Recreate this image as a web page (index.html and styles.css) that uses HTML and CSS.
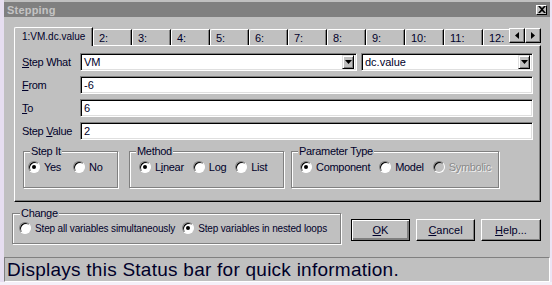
FILE: index.html
```html
<!DOCTYPE html>
<html>
<head>
    <title>Stepping</title>
    <meta charset="UTF-8">
    <link rel="stylesheet" href="styles.css">
</head>
<body>
    <div class="window">
        <div class="titlebar">
            <span class="title">Stepping</span>
            <span class="close">
                <svg width="8" height="7" viewBox="0 0 8 7"><path d="M0 0h2l2 2 2-2h2L5 3.5 8 7H6L4 5 2 7H0l3-3.5z" fill="#000"/></svg>
            </span>
        </div>

        <div class="tabstrip">
            <div class="tablist">
                <div class="tab active">1:VM.dc.value</div>
                <div class="tab">2:</div>
                <div class="tab">3:</div>
                <div class="tab">4:</div>
                <div class="tab">5:</div>
                <div class="tab">6:</div>
                <div class="tab">7:</div>
                <div class="tab">8:</div>
                <div class="tab">9:</div>
                <div class="tab">10:</div>
                <div class="tab">11:</div>
                <div class="tab">12:</div>
            </div>
            <div class="scroller">
                <span class="btn-small"><svg width="4" height="7" viewBox="0 0 4 7"><path d="M4 0v7L0 3.5z" fill="#000"/></svg></span>
                <span class="btn-small"><svg width="4" height="7" viewBox="0 0 4 7"><path d="M0 0v7l4-3.5z" fill="#000"/></svg></span>
            </div>
        </div>

        <div class="panel">
            <div class="row">
                <label class="label"><u>S</u>tep What</label>
                <div class="field combo wide">VM<span class="drop"><svg width="7" height="4" viewBox="0 0 7 4"><path d="M0 0h7L3.5 4z" fill="#000"/></svg></span></div>
                <div class="field combo narrow">dc.value<span class="drop"><svg width="7" height="4" viewBox="0 0 7 4"><path d="M0 0h7L3.5 4z" fill="#000"/></svg></span></div>
            </div>
            <div class="row">
                <label class="label"><u>F</u>rom</label>
                <div class="field">-6</div>
            </div>
            <div class="row">
                <label class="label"><u>T</u>o</label>
                <div class="field">6</div>
            </div>
            <div class="row">
                <label class="label">Step <u>V</u>alue</label>
                <div class="field">2</div>
            </div>

            <div class="groups">
                <div class="group step-it">
                    <span class="legend">Step It</span>
                    <div class="options">
                        <span class="opt"><span class="radio on"></span><span>Yes</span></span>
                        <span class="opt"><span class="radio"></span><span>No</span></span>
                    </div>
                </div>
                <div class="group method">
                    <span class="legend">Method</span>
                    <div class="options">
                        <span class="opt"><span class="radio on"></span><span>L<u>i</u>near</span></span>
                        <span class="opt"><span class="radio"></span><span>Log</span></span>
                        <span class="opt"><span class="radio"></span><span>List</span></span>
                    </div>
                </div>
                <div class="group param">
                    <span class="legend">Parameter Type</span>
                    <div class="options">
                        <span class="opt"><span class="radio on"></span><span>Component</span></span>
                        <span class="opt"><span class="radio"></span><span>Model</span></span>
                        <span class="opt disabled"><span class="radio"></span><span>Symbolic</span></span>
                    </div>
                </div>
            </div>
        </div>

        <div class="bottom">
            <div class="group change">
                <span class="legend">Change</span>
                <div class="options">
                    <span class="opt"><span class="radio"></span><span>Step all variables simultaneously</span></span>
                    <span class="opt"><span class="radio on"></span><span>Step variables in nested loops</span></span>
                </div>
            </div>
            <div class="buttons">
                <button class="button ok"><u>O</u>K</button>
                <button class="button"><u>C</u>ancel</button>
                <button class="button help"><u>H</u>elp...</button>
            </div>
        </div>

        <div class="statusbar">Displays this Status bar for quick information.</div>
    </div>
</body>
</html>
```

FILE: styles.css
```css
* {
    box-sizing: border-box;
}
body {
    margin: 0;
    background-color: #f4f0f8;
    font-family: "Liberation Sans", Arial, sans-serif;
    font-size: 10px;
    color: #00002a;
}
u {
    text-decoration: underline;
    text-underline-offset: 1px;
}
.window {
    width: 552px;
    height: 282px;
    overflow: hidden;
    background-color: #c0c0c0;
    border-left: 4px solid #e6def0;
    border-right: 2px solid #ece4f4;
    display: flex;
    flex-direction: column;
}

/* title bar */
.titlebar {
    margin-top: 2px;
    height: 15px;
    background-color: #808080;
    display: flex;
    align-items: center;
    justify-content: space-between;
    padding: 0 3px 0 3px;
}
.title {
    font-weight: bold;
    font-size: 11px;
    letter-spacing: 0.2px;
    color: #c4c4c4;
}
.close {
    width: 11px;
    height: 10px;
    background-color: #c0c0c0;
    border-top: 1px solid #fff;
    border-left: 1px solid #fff;
    border-right: 1px solid #000;
    border-bottom: 1px solid #000;
    display: flex;
    align-items: center;
    justify-content: center;
}

/* tabs */
.tabstrip {
    margin: 10px 0 -1px 10px;
    height: 19px;
    display: flex;
    position: relative;
    z-index: 1;
}
.tablist {
    width: 495px;
    overflow: hidden;
    display: flex;
    align-items: flex-end;
}
.tab {
    flex: none;
    width: 39px;
    height: 16px;
    margin-bottom: 1px;
    padding: 2px 0 0 5px;
    font-size: 11px;
    border-top: 1px solid #fff;
    border-left: 1px solid #fff;
    border-right: 1px solid #000;
    border-top-left-radius: 2px;
    box-shadow: inset -1px 0 #808080;
    white-space: nowrap;
}
.tab.active {
    width: 79px;
    height: 19px;
    margin-bottom: 0;
    padding: 3px 0 0 7px;
    font-size: 10px;
    background-color: #c0c0c0;
}
.scroller {
    display: flex;
    margin-top: 1px;
    height: 15px;
}
.btn-small {
    width: 16px;
    height: 15px;
    border-top: 1px solid #fff;
    border-left: 1px solid #fff;
    border-right: 1px solid #000;
    border-bottom: 1px solid #000;
    box-shadow: inset -1px -1px #808080;
    display: flex;
    align-items: center;
    justify-content: center;
}

/* panel */
.panel {
    margin-left: 10px;
    width: 527px;
    height: 157px;
    padding: 7px 0 0 7px;
    border-top: 1px solid #fff;
    border-left: 1px solid #fff;
    border-right: 1px solid #000;
    border-bottom: 1px solid #000;
    box-shadow: inset -1px -1px #808080;
}
.row {
    display: flex;
    align-items: center;
    height: 18px;
    margin-bottom: 5px;
}
.label {
    width: 58px;
    flex: none;
    font-size: 11px;
    letter-spacing: -0.3px;
}
.field {
    width: 453px;
    height: 18px;
    background-color: #fff;
    padding: 2px 0 0 3px;
    font-size: 11px;
    border-top: 1px solid #808080;
    border-left: 1px solid #808080;
    border-right: 1px solid #fff;
    border-bottom: 1px solid #fff;
    box-shadow: inset 1px 1px #000, inset -1px -1px #dfdfdf;
}
.combo {
    display: flex;
    justify-content: space-between;
    padding: 2px 2px 0 3px;
}
.combo.wide {
    width: 277px;
    margin-right: 4px;
}
.combo.narrow {
    width: 172px;
}
.drop {
    width: 12px;
    height: 14px;
    margin-top: -1px;
    background-color: #c0c0c0;
    border-top: 1px solid #dfdfdf;
    border-left: 1px solid #dfdfdf;
    border-right: 1px solid #000;
    border-bottom: 1px solid #000;
    box-shadow: inset 1px 1px #fff, inset -1px -1px #808080;
    display: flex;
    align-items: center;
    justify-content: center;
}

/* group boxes */
.groups {
    display: flex;
    margin: 11px 0 0 1px;
}
.group {
    height: 37px;
    border: 1px solid #808080;
    box-shadow: inset 1px 1px #fff, 1px 1px #fff;
    display: flex;
    flex-direction: column;
}
.legend {
    align-self: flex-start;
    margin: -7px 0 0 6px;
    padding: 0 1px;
    line-height: 13px;
    font-size: 11px;
    letter-spacing: -0.3px;
    background-color: #c0c0c0;
}
.options {
    display: flex;
    align-items: center;
    margin-top: 3px;
    padding-left: 4px;
    font-size: 11px;
    letter-spacing: -0.3px;
}
.opt {
    display: flex;
    align-items: center;
    gap: 4px;
    white-space: nowrap;
}
.step-it {
    width: 95px;
    margin-right: 11px;
}
.step-it .options {
    gap: 12px;
}
.method {
    width: 155px;
    margin-right: 7px;
}
.method .options {
    gap: 9px;
    padding-left: 9px;
}
.param {
    width: 208px;
}
.param .options {
    gap: 9px;
    padding-left: 8px;
}
.radio {
    flex: none;
    width: 12px;
    height: 12px;
    border-radius: 50%;
    background-color: #fff;
    border: 1px solid;
    border-color: #808080 #fff #fff #808080;
    box-shadow: inset 1px 1px #000;
    display: flex;
    align-items: center;
    justify-content: center;
}
.radio.on::after {
    content: "";
    width: 4px;
    height: 4px;
    border-radius: 50%;
    background-color: #000;
}
.opt.disabled {
    color: #8a8a8a;
    text-shadow: 1px 1px #f4f4f4;
}
.opt.disabled .radio {
    background-color: #c0c0c0;
}

/* bottom row */
.bottom {
    display: flex;
    align-items: flex-start;
    margin: 11px 0 0 8px;
}
.change {
    flex: none;
    width: 329px;
    height: 31px;
    margin-right: 10px;
}
.change .legend {
    margin-left: 7px;
}
.change .options {
    gap: 7px;
    margin-top: 2px;
    padding-left: 6px;
    font-size: 10px;
    letter-spacing: -0.15px;
}
.buttons {
    display: flex;
    gap: 6px;
    margin-top: 6px;
}
.button {
    width: 59px;
    height: 22px;
    padding: 0;
    font-family: "Liberation Sans", Arial, sans-serif;
    font-size: 11px;
    color: #00002a;
    background-color: #c0c0c0;
    border-top: 1px solid #fff;
    border-left: 1px solid #fff;
    border-right: 1px solid #000;
    border-bottom: 1px solid #000;
    box-shadow: inset -1px -1px #808080;
}
.button.ok {
    border: 1px solid #000;
    box-shadow: inset 1px 1px #fff, inset -2px -2px #808080;
}
.button.help {
    width: 60px;
}

/* status bar */
.statusbar {
    margin-top: 13px;
    height: 25px;
    padding-left: 2px;
    font-size: 19px;
    letter-spacing: 0.25px;
    line-height: 23px;
    white-space: nowrap;
    border-top: 1px solid #808080;
    border-left: 1px solid #808080;
    border-right: 1px solid #fff;
    border-bottom: 1px solid #fff;
}
```
